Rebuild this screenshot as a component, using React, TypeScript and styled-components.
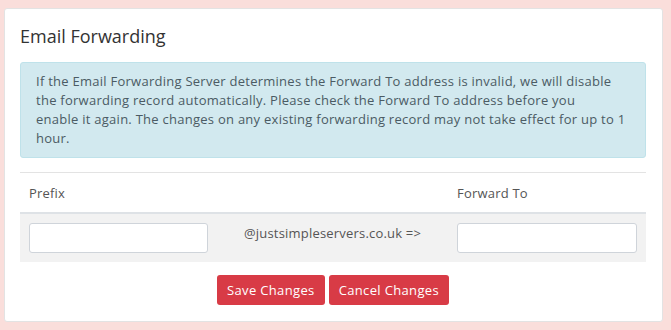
import styled, { createGlobalStyle } from "styled-components";

const GlobalStyle = createGlobalStyle`
  body {
    margin: 0;
    background-color: #fadedb;
    font-family: "Open Sans", "Liberation Sans", sans-serif;
  }
`;

const Page = styled.div`
  padding: 8px 8px 8px 4px;
`;

const Card = styled.section`
  background-color: #ffffff;
  border: 1px solid #e3e3e3;
  border-radius: 3px;
  padding: 16px 16px 16px 15px;
`;

const Title = styled.h2`
  margin: 0 0 15px;
  font-size: 18px;
  font-weight: 400;
  line-height: 22px;
  color: #333333;
`;

const Alert = styled.div`
  background-color: #d2e9ef;
  border: 1px solid #bfe2ea;
  border-radius: 3px;
  padding: 9px 12px 9px 15px;
  font-size: 13px;
  line-height: 19px;
  letter-spacing: 0.26px;
  color: #4b5b64;
`;

const Table = styled.table`
  width: 100%;
  margin-top: 14px;
  border-collapse: collapse;
  font-size: 13px;
  letter-spacing: 0.2px;
  color: #555555;
`;

const HeadCell = styled.th<{ $width?: string }>`
  width: ${({ $width }) => $width || "auto"};
  text-align: left;
  font-weight: 400;
  padding: 10px 9px;
  height: 19px;
  border-top: 1px solid #e3e3e3;
  border-bottom: 2px solid #dee2e6;
`;

const BodyRow = styled.tr`
  background-color: #f2f2f2;
`;

const Cell = styled.td<{ $center?: boolean }>`
  padding: 9px;
  text-align: ${({ $center }) => ($center ? "center" : "left")};
  vertical-align: top;
`;

const Domain = styled.div`
  padding-top: 1px;
  line-height: 18px;
`;

const Input = styled.input`
  display: block;
  box-sizing: border-box;
  width: 100%;
  height: 30px;
  border: 1px solid #cfd4da;
  border-radius: 3px;
  background: #ffffff;
  padding: 4px 8px;
  font: inherit;
`;

const Actions = styled.div`
  display: flex;
  justify-content: center;
  gap: 4px;
  margin-top: 13px;
`;

const Button = styled.button`
  height: 30px;
  padding: 0 10px;
  border: none;
  border-radius: 3px;
  background-color: #d83b46;
  color: #ffffff;
  font-family: inherit;
  font-size: 13px;
  letter-spacing: 0.35px;
`;

export default function App() {
  return (
    <>
      <GlobalStyle />
      <Page>
        <Card>
          <Title>Email Forwarding</Title>
          <Alert>
            If the Email Forwarding Server determines the Forward To address is
            invalid, we will disable
            <br />
            the forwarding record automatically. Please check the Forward To
            address before you
            <br />
            enable it again. The changes on any existing forwarding record may
            not take effect for up to 1 hour.
          </Alert>
          <Table>
            <thead>
              <tr>
                <HeadCell $width="179px">Prefix</HeadCell>
                <HeadCell></HeadCell>
                <HeadCell $width="180px">Forward To</HeadCell>
              </tr>
            </thead>
            <tbody>
              <BodyRow>
                <Cell>
                  <Input type="text" />
                </Cell>
                <Cell $center>
                  <Domain>@justsimpleservers.co.uk =&gt;</Domain>
                </Cell>
                <Cell>
                  <Input type="text" />
                </Cell>
              </BodyRow>
            </tbody>
          </Table>
          <Actions>
            <Button>Save Changes</Button>
            <Button>Cancel Changes</Button>
          </Actions>
        </Card>
      </Page>
    </>
  );
}
